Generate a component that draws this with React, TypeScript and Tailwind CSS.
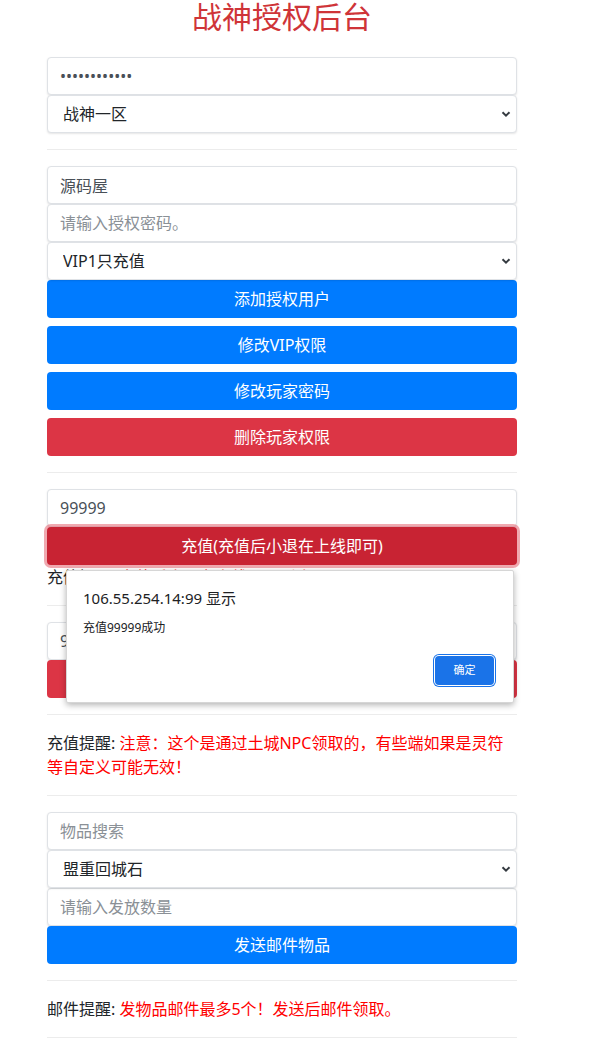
import React from "react";

const font = "font-['Noto_Sans','Noto_Sans_CJK_SC',sans-serif]";

function Field({ value, placeholder, type = "text" }: { value?: string; placeholder?: string; type?: string }) {
  return (
    <input
      type={type}
      defaultValue={value}
      placeholder={placeholder}
      className="block w-full h-[38px] px-3 bg-white border border-[#dfe2e6] rounded-[4px] text-[16px] leading-[24px] text-[#495057] placeholder:text-[#8a9096] shadow-[0_1px_2px_rgba(0,0,0,0.1)] outline-none"
    />
  );
}

function Picker({ value }: { value: string }) {
  return (
    <div className="relative">
      <select
        defaultValue={value}
        className="block w-full h-[38px] pl-[15px] pr-8 bg-white border border-[#dfe2e6] rounded-[4px] text-[16px] text-[#212529] appearance-none shadow-[0_1px_2px_rgba(0,0,0,0.1)] outline-none"
      >
        <option>{value}</option>
      </select>
      <svg
        className="absolute right-[6px] top-[15px] pointer-events-none"
        width="10"
        height="8"
        viewBox="0 0 10 8"
      >
        <path d="M1.5 2.2 L5 5.6 L8.5 2.2" fill="none" stroke="#343a40" strokeWidth="2" />
      </svg>
    </div>
  );
}

function Btn({ children, color = "blue", focused }: { children: React.ReactNode; color?: "blue" | "red"; focused?: boolean }) {
  const cls =
    color === "blue"
      ? "bg-[#007bff]"
      : focused
      ? "bg-[#c82333] shadow-[0_0_0_3px_rgba(225,83,97,0.5)]"
      : "bg-[#dc3545]";
  return (
    <button className={`block w-full h-[38px] rounded-[4px] text-white text-[16px] leading-[24px] ${cls}`}>
      {children}
    </button>
  );
}

function Line() {
  return <hr className="my-4 border-0 border-t border-[#ececec]" />;
}

export default function App() {
  return (
    <div className={`relative min-h-screen bg-white ${font}`}>
      <div className="ml-[47px] w-[470px] pb-10">
        <h1 className="text-center text-[30px] leading-[34px] text-[#cf3438] mb-[23px]">战神授权后台</h1>

        <Field type="password" value="123456789012" />
        <Picker value="战神一区" />

        <Line />

        <Field value="源码屋" />
        <Field placeholder="请输入授权密码。" />
        <Picker value="VIP1只充值" />
        <div className="flex flex-col gap-2">
          <Btn>添加授权用户</Btn>
          <Btn>修改VIP权限</Btn>
          <Btn>修改玩家密码</Btn>
          <Btn color="red">删除玩家权限</Btn>
        </div>

        <Line />

        <Field value="99999" />
        <Btn color="red" focused>
          充值(充值后小退在上线即可)
        </Btn>
        <div className="text-[16px] leading-[24px] text-[#212529]">
          充值提醒: <span className="text-[#ff0000]">充值后小退在上线即可到账。</span>
        </div>

        <Line />

        <Field value="99999" />
        <Btn color="red">充值积分(充值后小退在上线即可)</Btn>

        <Line />

        <div className="text-[16px] leading-[24px] text-[#212529]">
          充值提醒: <span className="text-[#ff0000]">注意：这个是通过土城NPC领取的，有些端如果是灵符等自定义可能无效！</span>
        </div>

        <Line />

        <Field placeholder="物品搜索" />
        <Picker value="盟重回城石" />
        <Field placeholder="请输入发放数量" />
        <Btn>发送邮件物品</Btn>

        <Line />

        <div className="text-[16px] leading-[24px] text-[#212529]">
          邮件提醒: <span className="text-[#ff0000]">发物品邮件最多5个！发送后邮件领取。</span>
        </div>

        <Line />
      </div>

      {/* alert box */}
      <div className="absolute left-[66px] top-[570px] w-[448px] h-[133px] bg-white border border-[#d6d6d6] rounded-[2px] shadow-[0_2px_6px_rgba(0,0,0,0.3)] px-4">
        <div className="pt-[17px] text-[15px] leading-[20px] text-[#202124]">106.55.254.14:99 显示</div>
        <div className="mt-[10px] text-[12px] leading-[20px] text-[#202124]">充值99999成功</div>
        <div className="mt-[18px] flex justify-end pr-[3px]">
          <button className="w-[59px] h-[29px] rounded-[4px] bg-[#1a73e8] text-white text-[11px] shadow-[0_0_0_1px_#ffffff,0_0_0_2px_#1a73e8]">
            确定
          </button>
        </div>
      </div>
    </div>
  );
}
